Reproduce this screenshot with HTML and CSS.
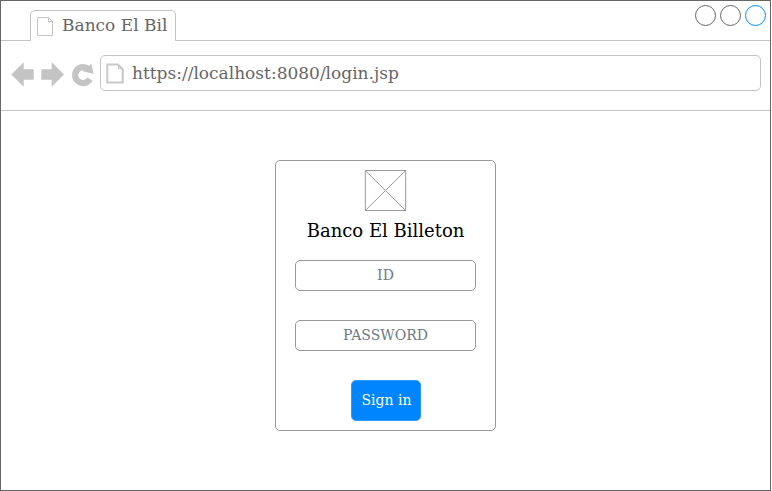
FILE: index.html
```html
<!DOCTYPE html>
<html lang="es">
<head>
<meta charset="utf-8">
<title>Banco El Billeton</title>
<link rel="stylesheet" href="styles.css">
</head>
<body>
<div class="window">
  <header class="tabbar">
    <div class="lead"></div>
    <div class="tab">
      <svg class="tab-icon" width="17" height="20" viewBox="0 0 17 20"><path d="M.5.5h11l4 4v14H.5zM11.500.5v4h4"/></svg>
      <span>Banco El Bil</span>
    </div>
    <div class="controls">
      <svg width="72" height="22" viewBox="0 0 72 22"><circle cx="10.500" cy="11.500" r="10"/><circle cx="35.500" cy="11.500" r="10"/><circle class="active" cx="60.500" cy="11.500" r="10"/></svg>
    </div>
  </header>
  <nav class="toolbar">
    <svg class="nav-icons" width="84" height="26" viewBox="0 0 84 26">
      <path d="M.3 13.500 12.700 1.300v7h10v10.400h-10v7zM53 13.500 40.700 1.300v7H30.300v10.400h10.400v7z"/>
      <path class="reload" d="M79 18.200A8 8 0 1 1 77.700 8.300"/>
      <path d="M80.300 2.700 82.700 12.800 71.500 10.200z"/>
    </svg>
    <div class="address">
      <svg class="page-icon" width="18" height="21" viewBox="0 0 18 21"><path d="M1.300 1.500h10.700l4.700 4.700v13.300H1.300z"/><path class="fold" d="M12.500 1.500v4.200h4.200"/></svg>
      <span>https://localhost:8080/login.jsp</span>
    </div>
  </nav>
  <main class="page">
    <form class="card">
      <svg class="logo" width="43" height="41" viewBox="-1 0 43 41"><path d="M.3.5h40.400v40H.3zM.3.5l40.400 40M40.700.5.3 40.500"/></svg>
      <h1>Banco El Billeton</h1>
      <input class="field" type="text" placeholder="ID">
      <input class="field" type="password" placeholder="PASSWORD">
      <button class="submit" type="button">Sign in</button>
    </form>
  </main>
</div>
</body>
</html>
```

FILE: styles.css
```css
* { box-sizing: border-box; }
body { margin: 0; background: #fff; font-family: "DejaVu Serif", serif; }
.window { width: 771px; height: 491px; border: 1px solid #666; display: flex; flex-direction: column; overflow: hidden; }
svg { display: block; fill: none; flex: none; }
.tabbar { height: 40px; display: flex; align-items: flex-end; }
.lead { width: 29px; height: 40px; border-bottom: 1px solid #c4c4c4; }
.tab { width: 146px; height: 31px; border: 1px solid #c4c4c4; border-bottom: 0; border-radius: 5px 5px 0 0; display: flex; padding: 6px 0 0 6px; gap: 8px; font-size: 17px; line-height: 20px; color: #666; white-space: nowrap; }
.tab span { margin-top: -2px; }
.tab-icon { stroke: #c4c4c4; }
.controls { flex: 1; height: 40px; border-bottom: 1px solid #c4c4c4; display: flex; justify-content: flex-end; padding: 3px 3px 0 0; stroke: #666; }
.controls .active { stroke: #008cff; }
.toolbar { height: 70px; border-bottom: 1px solid #c4c4c4; display: flex; padding: 14px 9px 0 10px; gap: 5px; }
.nav-icons { margin-top: 6px; fill: #c4c4c4; }
.nav-icons .reload { fill: none; stroke: #c4c4c4; stroke-width: 6.2; }
.address { flex: 1; height: 36px; border: 1px solid #c4c4c4; border-radius: 5px; display: flex; padding: 7px 0 0 5px; gap: 8px; font-size: 17px; line-height: 20px; color: #666; }
.page-icon { stroke: #c8c8c8; stroke-width: 2; }
.page-icon .fold { stroke-width: 1; }
.page { flex: 1; padding-top: 49px; display: flex; justify-content: center; align-items: flex-start; }
.card { width: 221px; height: 271px; border: 1px solid #999; border-radius: 5px; display: flex; flex-direction: column; align-items: center; padding-top: 9px; }
.logo { stroke: #999; }
h1 { margin: 9px 0 18px; font-size: 18px; line-height: 22px; font-weight: 400; color: #000; white-space: nowrap; }
.field { width: 181px; height: 31px; border: 1px solid #999; border-radius: 5px; padding: 0 0 2px; margin: 0 0 29px; background: #fff; text-align: center; font: 14px "DejaVu Serif", serif; color: #6c7a83; }
.field::placeholder { color: #6c7a83; opacity: 1; }
.submit { width: 70px; height: 41px; margin-left: 1px; border: 1px solid #3399ff; border-radius: 5px; background: #0085ff; padding: 0 0 2px 1px; font: 14px "DejaVu Serif", serif; color: #fff; }
```
